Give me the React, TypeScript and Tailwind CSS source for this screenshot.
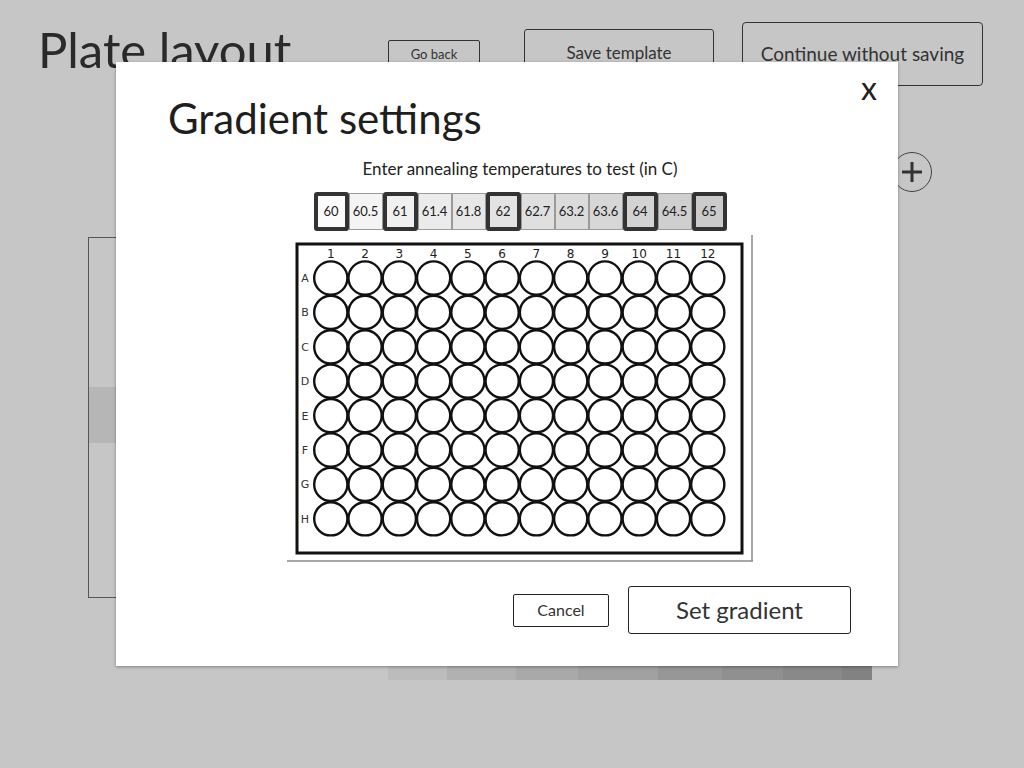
import React from "react";

const temps: { v: string; thick: boolean; bg: string }[] = [
  { v: "60", thick: true, bg: "bg-[#fbfbfb]" },
  { v: "60.5", thick: false, bg: "bg-[#f4f4f4]" },
  { v: "61", thick: true, bg: "bg-[#f0f0f0]" },
  { v: "61.4", thick: false, bg: "bg-[#ebebeb]" },
  { v: "61.8", thick: false, bg: "bg-[#e7e7e7]" },
  { v: "62", thick: true, bg: "bg-[#e3e3e3]" },
  { v: "62.7", thick: false, bg: "bg-[#dfdfdf]" },
  { v: "63.2", thick: false, bg: "bg-[#dbdbdb]" },
  { v: "63.6", thick: false, bg: "bg-[#d7d7d7]" },
  { v: "64", thick: true, bg: "bg-[#d3d3d3]" },
  { v: "64.5", thick: false, bg: "bg-[#cfcfcf]" },
  { v: "65", thick: true, bg: "bg-[#cbcbcb]" },
];

const rows = ["A", "B", "C", "D", "E", "F", "G", "H"];
const cols = Array.from({ length: 12 }, (_, i) => i + 1);

function Plate() {
  const cx0 = 43.8;
  const cy0 = 43;
  const dx = 34.27;
  const dy = 34.4;
  return (
    <svg width="468" height="330" viewBox="0 0 468 330" className="block">
      <line x1="465" y1="0" x2="465" y2="326" stroke="#8a8a8a" strokeWidth="1.5" />
      <line x1="0" y1="326" x2="466" y2="326" stroke="#8a8a8a" strokeWidth="1.5" />
      <rect x="10" y="9" width="445" height="309" fill="#fff" stroke="#111" strokeWidth="3" />
      {cols.map((c, i) => (
        <text
          key={c}
          x={cx0 + i * dx}
          y="23"
          textAnchor="middle"
          fontSize="12"
          fontFamily="'DejaVu Sans', sans-serif"
          fill="#222"
        >
          {c}
        </text>
      ))}
      {rows.map((r, j) => (
        <text
          key={r}
          x="18"
          y={cy0 + j * dy + 4}
          textAnchor="middle"
          fontSize="11"
          fontFamily="'DejaVu Sans', sans-serif"
          fill="#333"
        >
          {r}
        </text>
      ))}
      {rows.map((r, j) =>
        cols.map((c, i) => (
          <circle
            key={r + c}
            cx={cx0 + i * dx}
            cy={cy0 + j * dy}
            r="16.6"
            fill="#fff"
            stroke="#111"
            strokeWidth="2.4"
          />
        ))
      )}
    </svg>
  );
}

export default function App() {
  const font = "font-['Lato','Open_Sans',sans-serif]";
  return (
    <div className={`relative w-[1024px] h-[768px] overflow-hidden bg-[#c6c6c6] text-[#2a2a2a] ${font}`}>
      {/* Background page */}
      <div className="flex flex-col">
        <div className="flex items-start pl-[38px]">
          <h1 className="mt-[25px] w-[350px] text-[49px] leading-none font-normal text-[#2a2a2a]">Plate layout</h1>
          <button className="mt-[40px] h-[30px] w-[92px] rounded-[2px] border border-[#333] text-[13px] text-[#333]">
            Go back
          </button>
          <button className="ml-[44px] mt-[29px] h-[48px] w-[190px] rounded-[3px] border border-[#333] text-[17px] text-[#333]">
            Save template
          </button>
          <button className="ml-[28px] mt-[22px] h-[64px] w-[241px] rounded-[4px] border border-[#333] text-[19px] text-[#333]">
            Continue without saving
          </button>
        </div>
        <div className="mt-[66px] pl-[892px]">
          <div className="flex h-[40px] w-[40px] items-center justify-center rounded-full border-[1.5px] border-[#444]">
            <svg width="22" height="22" viewBox="0 0 22 22">
              <line x1="11" y1="1" x2="11" y2="21" stroke="#333" strokeWidth="3" />
              <line x1="1" y1="11" x2="21" y2="11" stroke="#333" strokeWidth="3" />
            </svg>
          </div>
        </div>
        <div className="ml-[88px] mt-[45px] flex h-[361px] w-[300px] flex-col border border-[#555]">
          <div className="h-[149px]" />
          <div className="h-[56px] bg-[#b6b6b6]" />
        </div>
        <div className="ml-[388px] mt-[42px] flex h-[40px] w-[484px]">
          <div className="w-[59px] bg-[#bcbcbc]" />
          <div className="w-[69px] bg-[#b1b1b1]" />
          <div className="w-[62px] bg-[#a9a9a9]" />
          <div className="w-[80px] bg-[#a1a1a1]" />
          <div className="w-[64px] bg-[#979797]" />
          <div className="w-[61px] bg-[#909090]" />
          <div className="w-[59px] bg-[#898989]" />
          <div className="w-[30px] bg-[#828282]" />
        </div>
      </div>

      {/* Modal */}
      <div className="absolute left-[116px] top-[62px] flex h-[604px] w-[782px] flex-col bg-white shadow-[0_1px_3px_rgba(0,0,0,0.35)]">
        <button className="absolute right-[21px] top-[10px] text-[32px] leading-none text-[#222]">x</button>
        <h2 className="mt-[35px] pl-[52px] text-[42px] leading-none font-normal text-[#1e1e1e]">Gradient settings</h2>
        <div className="flex flex-col items-center pl-[26px]">
          <p className="mt-[21px] text-[17px] leading-none text-[#222]">Enter annealing temperatures to test (in C)</p>
          <div className="mt-[15px] flex h-[39px] items-center">
            {temps.map((t) =>
              t.thick ? (
                <div
                  key={t.v}
                  className={`flex h-[39px] w-[35px] items-center justify-center rounded-[3px] border-[4px] border-[#333] text-[13px] text-[#222] ${t.bg}`}
                >
                  {t.v}
                </div>
              ) : (
                <div
                  key={t.v}
                  className={`flex h-[37px] w-[34px] items-center justify-center border border-[#9a9a9a] text-[13px] text-[#222] ${t.bg}`}
                >
                  {t.v}
                </div>
              )
            )}
          </div>
          <div className="mt-[4px] pl-[2px]">
            <Plate />
          </div>
        </div>
        <div className="mt-[21px] flex items-center justify-end gap-[19px] pr-[47px]">
          <button className="h-[33px] w-[96px] rounded-[2px] border border-[#222] text-[16px] text-[#333]">Cancel</button>
          <button className="h-[48px] w-[223px] rounded-[3px] border border-[#222] text-[24px] text-[#333]">
            Set gradient
          </button>
        </div>
      </div>
    </div>
  );
}
